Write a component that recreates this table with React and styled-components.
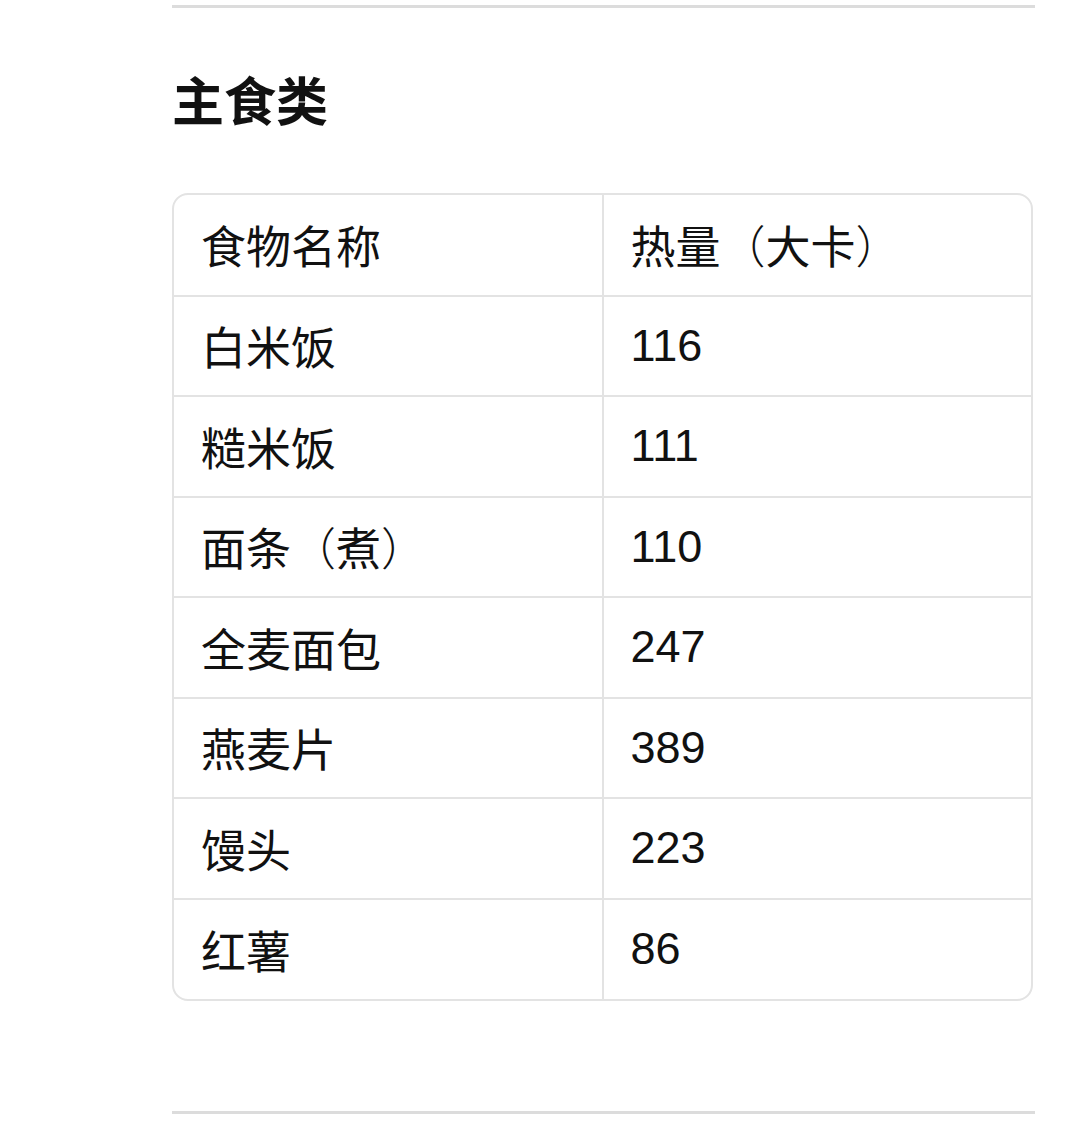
import React from 'react';
import styled, { createGlobalStyle } from 'styled-components';

const GlobalStyle = createGlobalStyle`
  body {
    margin: 0;
    background: #fff;
    color: #111;
    font-family: "Liberation Sans", "Noto Sans CJK SC", sans-serif;
  }
`;

const Page = styled.div`
  padding: 5px 45px 0 172px;
`;

const Rule = styled.hr`
  margin: ${(p) => p.$top || 0}px 0 0;
  border: none;
  height: 3px;
  background: #dcdcdc;
`;

const Heading = styled.h2`
  margin: 63px 0 0;
  font-size: 52px;
  line-height: 64px;
  font-weight: 700;
  color: #111;
`;

const TableWrap = styled.div`
  margin: 58px 2px 0 0;
  border: 2px solid #e3e3e3;
  border-radius: 16px;
  overflow: hidden;
`;

const Table = styled.table`
  width: 100%;
  border-collapse: collapse;
  table-layout: fixed;
`;

const Row = styled.tr`
  height: 100.5px;
  & + & td {
    border-top: 2px solid #e3e3e3;
  }
`;

const Cell = styled.td`
  padding: 0 0 0 27px;
  font-size: 45px;
  color: #111;
  vertical-align: middle;
  & + & {
    border-left: 2px solid #e3e3e3;
  }
`;

const Paren = styled.span`
  font-family: "Noto Sans CJK SC", sans-serif;
  font-weight: 300;
`;

const rows = [
  [['食物名称'], ['热量', '大卡']],
  [['白米饭'], ['116']],
  [['糙米饭'], ['111']],
  [['面条', '煮'], ['110']],
  [['全麦面包'], ['247']],
  [['燕麦片'], ['389']],
  [['馒头'], ['223']],
  [['红薯'], ['86']],
];

const Text = ({ parts }) =>
  parts.length > 1 ? (
    <>
      {parts[0]}
      <Paren>（</Paren>
      {parts[1]}
      <Paren>）</Paren>
    </>
  ) : (
    parts[0]
  );

export default function App() {
  return (
    <>
      <GlobalStyle />
      <Page>
        <Rule />
        <Heading>主食类</Heading>
        <TableWrap>
          <Table>
            <tbody>
              {rows.map(([name, kcal]) => (
                <Row key={name.join()}>
                  <Cell>
                    <Text parts={name} />
                  </Cell>
                  <Cell>
                    <Text parts={kcal} />
                  </Cell>
                </Row>
              ))}
            </tbody>
          </Table>
        </TableWrap>
        <Rule $top={110} />
      </Page>
    </>
  );
}
